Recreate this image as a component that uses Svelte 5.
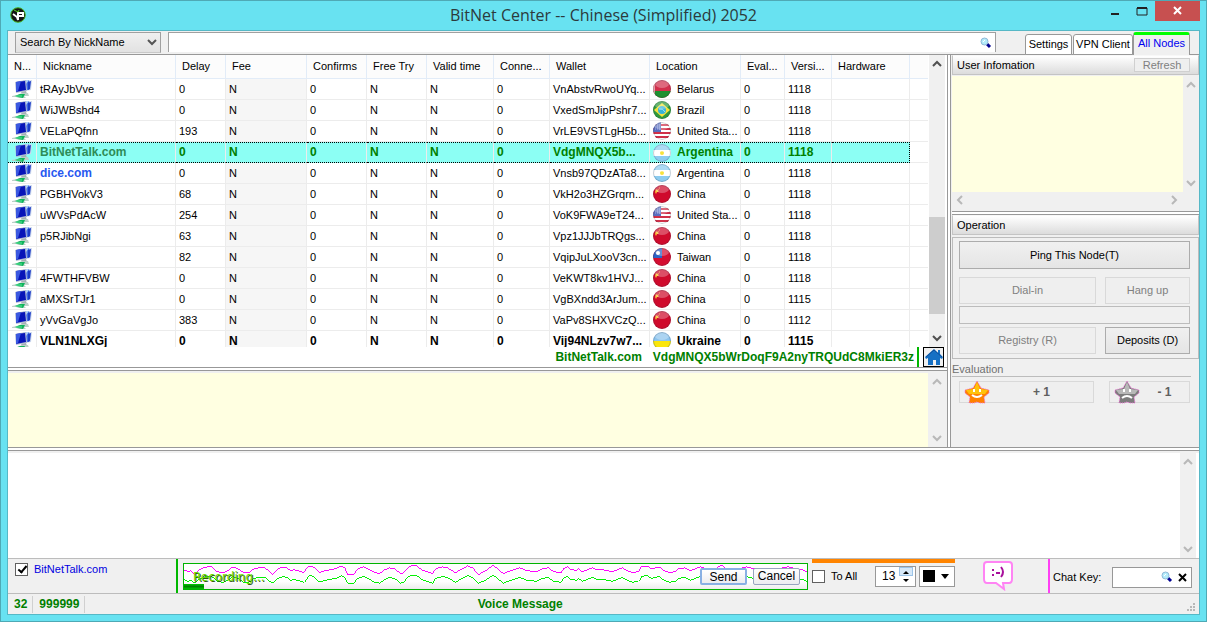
<script lang="ts">
  type Peer = {
    name: string;
    delay: string;
    wallet: string;
    flag: string;
    location: string;
    version: string;
    kind?: string;
  };

  const columns = [
    { title: 'N...', width: 29 },
    { title: 'Nickname', width: 139 },
    { title: 'Delay', width: 50 },
    { title: 'Fee', width: 81 },
    { title: 'Confirms', width: 60 },
    { title: 'Free Try', width: 60 },
    { title: 'Valid time', width: 67 },
    { title: 'Conne...', width: 56 },
    { title: 'Wallet', width: 100 },
    { title: 'Location', width: 91 },
    { title: 'Eval...', width: 44 },
    { title: 'Versi...', width: 47 },
    { title: 'Hardware', width: 78 }
  ];

  const peers: Peer[] = [
    { name: 'tRAyJbVve', delay: '0', wallet: 'VnAbstvRwoUYq...', flag: 'by', location: 'Belarus', version: '1118' },
    { name: 'WiJWBshd4', delay: '0', wallet: 'VxedSmJipPshr7...', flag: 'br', location: 'Brazil', version: '1118' },
    { name: 'VELaPQfnn', delay: '193', wallet: 'VrLE9VSTLgH5b...', flag: 'us', location: 'United Sta...', version: '1118' },
    { name: 'BitNetTalk.com', delay: '0', wallet: 'VdgMNQX5b...', flag: 'ar', location: 'Argentina', version: '1118', kind: 'selected' },
    { name: 'dice.com', delay: '0', wallet: 'Vnsb97QDzATa8...', flag: 'ar', location: 'Argentina', version: '1118', kind: 'site' },
    { name: 'PGBHVokV3', delay: '68', wallet: 'VkH2o3HZGrqrn...', flag: 'cn', location: 'China', version: '1118' },
    { name: 'uWVsPdAcW', delay: '254', wallet: 'VoK9FWA9eT24...', flag: 'us', location: 'United Sta...', version: '1118' },
    { name: 'p5RJibNgi', delay: '63', wallet: 'Vpz1JJJbTRQgs...', flag: 'cn', location: 'China', version: '1118' },
    { name: '', delay: '82', wallet: 'VqipJuLXooV3cn...', flag: 'tw', location: 'Taiwan', version: '1118' },
    { name: '4FWTHFVBW', delay: '0', wallet: 'VeKWT8kv1HVJ...', flag: 'cn', location: 'China', version: '1118' },
    { name: 'aMXSrTJr1', delay: '0', wallet: 'VgBXndd3ArJum...', flag: 'cn', location: 'China', version: '1115' },
    { name: 'yVvGaVgJo', delay: '383', wallet: 'VaPv8SHXVCzQ...', flag: 'cn', location: 'China', version: '1112' },
    { name: 'VLN1NLXGj', delay: '0', wallet: 'Vij94NLzv7w7...', flag: 'ua', location: 'Ukraine', version: '1115', kind: 'own' }
  ];

  // x, y pairs of the recorded signal
  const wave = [
    [0, 6], [4, 8], [7, 7], [11, 11], [15, 6], [19, 4], [24, 3], [28, 3], [33, 8], [39, 9], [44, 7], [49, 3],
    [54, 5], [60, 9], [65, 9], [70, 5], [75, 4], [81, 4], [86, 8], [89, 11], [94, 5], [99, 3], [103, 4], [107, 7],
    [110, 6], [114, 7], [120, 9], [124, 3], [127, 2], [131, 4], [136, 9], [141, 7], [146, 6], [152, 5], [158, 2],
    [161, 4], [164, 11], [170, 11], [174, 5], [180, 3], [186, 6], [191, 9], [196, 10], [201, 6], [206, 4], [211, 5],
    [217, 10], [220, 9], [224, 4], [227, 2], [233, 2], [238, 6], [249, 10], [252, 5], [259, 3], [264, 4], [272, 9],
    [277, 6], [284, 2], [289, 4], [295, 11], [302, 7], [309, 2], [314, 5], [320, 10], [327, 7], [336, 4], [344, 7],
    [353, 8], [359, 5], [365, 4], [370, 8], [378, 9], [380, 5], [384, 3], [387, 6], [390, 6], [393, 7], [395, 5],
    [399, 8], [409, 4], [414, 6], [420, 6], [429, 8], [439, 4], [444, 7], [449, 9], [455, 8], [458, 3], [464, 2],
    [468, 5], [476, 3], [481, 7], [486, 9], [492, 8], [495, 5], [502, 4], [507, 7], [512, 5], [517, 3], [530, 7],
    [538, 1], [547, 8], [563, 3], [571, 5], [580, 8], [605, 3], [619, 6], [624, 8]
  ];

  const topWave = wave.map(([x, y]) => `${x},${y}`).join(' ');
  const bottomWave = wave.map(([x, y]) => `${x},${Math.min(y + 10, 20)}`).join(' ');

  let fontSize = $state(13);
  let showSender = $state(true);
  let toAll = $state(false);
</script>

{#snippet chevron(path: string)}
  <svg class="chevron" width="10" height="10" viewBox="0 0 10 10"><path d={path} fill="none" stroke="currentColor" stroke-width="2" /></svg>
{/snippet}

{#snippet vbar()}
  <div class="vbar">
    {@render chevron('M1 7 5 3 9 7')}
    {@render chevron('M1 3 5 7 9 3')}
  </div>
{/snippet}

{#snippet magnifier()}
  <svg width="12" height="12" viewBox="0 0 12 12">
    <path d="M7 7 10 10" stroke="#000090" stroke-width="3" />
    <circle cx="4.5" cy="4.5" r="3.5" fill="#b4ecfa" stroke="#8fb8d8" />
    <path d="M3 5 5 3" stroke="#fff" />
  </svg>
{/snippet}

{#snippet computers()}
  <svg class="computers" width="21" height="20" viewBox="0 0 21 20">
    <path d="M12 2l8-1-1 10-6 1z" fill="#ccd8ec" />
    <path d="M11 2l6-1 1 9-5 2z" fill="#3d68e4" />
    <path d="M16 3l3-1-1 8-2 1z" fill="#1c3cc8" />
    <path d="M11 1h6l-3 4z" fill="#b4d4fa" />
    <path d="M3 3 14 1l1 11-11 2z" fill="#b4bcd4" />
    <path d="M4 3 13 2l1 9-10 2z" fill="#0714b8" />
    <path d="M4 3 9 2 6 12 4 13z" fill="#3a58e0" />
    <path d="M9 13l5-1 1 3h-5z" fill="#a4b0b4" />
    <path d="M0 17l5-1 5-2h6l1 3h-5l2 2H7l-3-1H0z" fill="#bcd0c8" />
    <path d="M3 17l5-2 5 0-2 4-5-1z" fill="#10b45c" />
    <path d="M4 17h6" stroke="#58e898" />
  </svg>
{/snippet}

{#snippet flagIcon(code: string)}
  <svg class="flag" width="18" height="18" viewBox="0 0 18 18">
    <g clip-path="url(#ball)">
      {#if code === 'by'}
        <path fill="#d2304c" d="M0 0h18v18H0z" />
        <path fill="#1f9030" d="M0 11h18v7H0z" />
        <path fill="#eba6ae" d="M0 0h2v18H0z" />
      {:else if code === 'br'}
        <path fill="#2f9a3c" d="M0 0h18v18H0z" />
        <path fill="#f6e23c" d="M9 2l8 7-8 7-8-7z" />
        <circle cx="9" cy="9" r="4" fill="#38b4d8" />
        <path d="M6 8q4-1 6 3" stroke="#a4e4f4" fill="none" />
      {:else if code === 'us'}
        <path fill="#fff" d="M0 0h18v18H0z" />
        <path d="M0 3h18M0 7h18M0 11h18M0 15h18" stroke="#d03048" stroke-width="2" />
        <path fill="#5a6fc0" d="M0 0h8v10H0z" />
        <path d="M2 3h6M2 5h6M2 7h6" stroke="#a5b2e2" stroke-dasharray="1 1" />
      {:else if code === 'ar'}
        <path fill="#8cccf0" d="M0 0h18v18H0z" />
        <path fill="#fff" d="M0 6h18v6H0z" />
        <circle cx="9" cy="9" r="2" fill="#f8e23c" />
      {:else if code === 'tw'}
        <path fill="#d40c30" d="M0 0h18v18H0z" />
        <path fill="#2c62c4" d="M0 0h9v10H0z" />
        <circle cx="5" cy="5" r="2" fill="#fff" />
      {:else if code === 'ua'}
        <path fill="#8cc4ee" d="M0 0h18v18H0z" />
        <path fill="#fae60c" d="M0 9h18v9H0z" />
      {:else}
        <path fill="#cf0a2c" d="M0 0h18v18H0z" />
        <path d="M3 4l1 1 2-1-1 2 1 1-2 0-1 2-1-2z" fill="#f8c030" />
        <path d="M6 3h1" stroke="#f0a030" />
      {/if}
      <ellipse cx="9" cy="4" rx="7" ry="4" fill="#fff" opacity="0.28" />
      <circle cx="9" cy="9" r="8.5" fill="none" stroke="#303848" opacity="0.25" />
    </g>
  </svg>
{/snippet}

{#snippet star(light: string, dark: string, mouth: string)}
  <svg width="26" height="24" viewBox="0 0 26 24">
    <path d="M13 1l4 7 8 2v3l-5 4 1 6h-5l-3-1-3 1H5l1-6-5-4v-3l8-2z" fill={dark} stroke="#f070d8" stroke-dasharray="1 1" />
    <path d="M13 2l3 7 8 1-3 4H5l-3-4 8-1z" fill={light} />
    <path d="M10 9v3M16 9v3" stroke="#fff" stroke-width="2" />
    <path d={mouth} fill="none" stroke="#fff" stroke-width="2" />
  </svg>
{/snippet}

<svg class="defs" width="0" height="0"><clipPath id="ball"><circle cx="9" cy="9" r="9" /></clipPath></svg>

<div class="window">
  <header class="titlebar">
    <svg class="logo" width="16" height="16" viewBox="0 0 16 16">
      <circle cx="8" cy="8" r="7.3" fill="#161616" stroke="#48b020" stroke-width="1" />
      <path d="M3 7l4 3 1 3V6h5v3H9" fill="none" stroke="#fff" stroke-width="2" />
      <path d="M4 3l4 2 1-2" fill="none" stroke="#58d020" />
    </svg>
    <h1>BitNet Center -- Chinese (Simplified) 2052</h1>
    <div class="window-buttons">
      <button aria-label="Minimize"><svg width="10" height="12"><path d="M1 9h8" stroke="#222" stroke-width="2" /></svg></button>
      <button aria-label="Maximize"><svg width="12" height="10"><path d="M1 2h10v7H1z" fill="none" stroke="#222" stroke-width="1" /><path d="M1 2h10" stroke="#222" stroke-width="2" /></svg></button>
      <button class="close" aria-label="Close"><svg width="10" height="10"><path d="M1 1 8 8M8 1 1 8" stroke="#fff" stroke-width="2" /></svg></button>
    </div>
  </header>

  <div class="client">
    <div class="toolbar">
      <label class="search-by">
        <select aria-label="Search by"><option>Search By NickName</option></select>
        {@render chevron('M1 3 5 7 9 3')}
      </label>
      <div class="search">
        <input type="text" aria-label="Search" />
        {@render magnifier()}
      </div>
      <nav class="tabs">
        <button>Settings</button>
        <button class="vpn">VPN Client</button>
        <button class="active">All Nodes</button>
      </nav>
    </div>

    <div class="main">
      <section class="nodes">
        <div class="list">
          <div class="table-view">
            <table>
              <colgroup>
                {#each columns as column}
                  <col style="width: {column.width}px" />
                {/each}
                <col />
              </colgroup>
              <thead>
                <tr>
                  {#each columns as column}
                    <th>{column.title}</th>
                  {/each}
                  <th></th>
                </tr>
              </thead>
              <tbody>
                {#each peers as peer}
                  <tr class={peer.kind}>
                    <td>{@render computers()}</td>
                    <td class="name">{peer.name}</td>
                    <td>{peer.delay}</td>
                    <td class="fee">N</td>
                    <td>0</td>
                    <td>N</td>
                    <td>N</td>
                    <td>0</td>
                    <td>{peer.wallet}</td>
                    <td><span class="place">{@render flagIcon(peer.flag)}{peer.location}</span></td>
                    <td>0</td>
                    <td>{peer.version}</td>
                    <td></td>
                    <td></td>
                  </tr>
                {/each}
              </tbody>
            </table>
          </div>
          <div class="vbar dark">
            {@render chevron('M1 7 5 3 9 7')}
            <div class="thumb"></div>
            {@render chevron('M1 3 5 7 9 3')}
          </div>
        </div>
        <div class="wallet-line">
          <span>BitNetTalk.com</span>
          <span class="address">VdgMNQX5bWrDoqF9A2nyTRQUdC8MkiER3z</span>
          <button class="home" aria-label="Home">
            <svg width="18" height="18" viewBox="0 0 18 18">
              <path d="M9 1 0 9l1 2 2-1v7h5v-5h3v5h4v-7l2 1 1-2-3-3V2h-2v3z" fill="#1670c4" />
              <path d="M9 2 1 9M9 2l8 7" stroke="#0d4c98" />
            </svg>
          </button>
        </div>
        <div class="splitter"></div>
        <div class="notice">
          <textarea aria-label="Notice" readonly></textarea>
          {@render vbar()}
        </div>
      </section>

      <div class="vsplitter"></div>

      <aside>
        <div class="panel-title">
          <h2>User Infomation</h2>
          <button class="refresh" disabled>Refresh</button>
        </div>
        <div class="info">
          <textarea aria-label="User information" readonly></textarea>
          {@render vbar()}
        </div>
        <div class="hbar">
          {@render chevron('M7 1 3 5 7 9')}
          {@render chevron('M3 1 7 5 3 9')}
        </div>
        <div class="splitter"></div>
        <div class="panel-title"><h2>Operation</h2></div>
        <div class="operations">
          <button class="push wide">Ping This Node(T)</button>
          <button class="push" disabled>Dial-in</button>
          <button class="push" disabled>Hang up</button>
          <div class="progress wide"></div>
          <button class="push" disabled>Registry (R)</button>
          <button class="push">Deposits (D)</button>
        </div>
        <h2 class="evaluation-title">Evaluation</h2>
        <div class="evaluation">
          <button class="vote up" disabled>{@render star('#ffc20a', '#ff8200', 'M8 15q5 4 10 0')}<span>+ 1</span></button>
          <button class="vote down" disabled>{@render star('#b8b8b8', '#7c7c7c', 'M8 18q5-4 10 0')}<span>- 1</span></button>
        </div>
      </aside>
    </div>

    <div class="splitter long"></div>
    <div class="chat">
      <textarea aria-label="Chat" readonly></textarea>
      {@render vbar()}
    </div>

    <footer>
      <div class="sender">
        <label><input type="checkbox" bind:checked={showSender} />BitNetTalk.com</label>
      </div>
      <div class="recorder">
        <svg class="wave" viewBox="0 0 624 26" preserveAspectRatio="none">
          <polyline points={topWave} stroke="#ff00ff" />
          <polyline points={bottomWave} stroke="#00f000" />
        </svg>
        <span class="recording">Recording...</span>
        <div class="level"></div>
        <div class="record-buttons">
          <button class="send">Send</button>
          <button>Cancel</button>
        </div>
      </div>
      <div class="options">
        <label><input type="checkbox" bind:checked={toAll} />To All</label>
        <div class="spin">
          <input type="text" aria-label="Font size" bind:value={fontSize} />
          <div class="spin-buttons">
            <button class="plus" aria-label="Increase" onclick={() => fontSize++}><svg width="14" height="8"><path d="M4 6h6L7 3z" /></svg></button>
            <button aria-label="Decrease" onclick={() => fontSize--}><svg width="14" height="8"><path d="M4 2h6L7 5z" /></svg></button>
          </div>
        </div>
        <button class="colour" aria-label="Text colour"><i></i><svg width="8" height="5"><path d="M0 0h8L4 5z" /></svg></button>
      </div>
      <button class="smiley" aria-label="Smileys">
        <svg width="30" height="30" viewBox="0 0 30 30">
          <path d="M4 1h22q3 0 3 3v14q0 4-3 4h-6l1 6-8-6H4q-3 0-3-4V4q0-3 3-3z" fill="#fff" stroke="#ff84f4" stroke-width="2" />
          <path d="M10 8v2M10 13v2M13 12h4M18 6q4 5 0 10" fill="none" stroke="#a8109c" stroke-width="2" />
        </svg>
      </button>
      <div class="chat-key">
        <label for="chat-key">Chat Key:</label>
        <div class="key-box">
          <input id="chat-key" type="text" />
          {@render magnifier()}
          <button aria-label="Clear"><svg width="9" height="9"><path d="M1 1 8 8M8 1 1 8" stroke="#000" stroke-width="2" /></svg></button>
        </div>
      </div>
    </footer>

    <div class="statusbar">
      <span>32</span>
      <span>999999</span>
      <span class="message">Voice Message</span>
      <svg width="9" height="9"><path d="M6 1h2M3 4h2M6 4h2M0 7h2M3 7h2M6 7h2" stroke="#b8b8b8" stroke-width="2" /></svg>
    </div>
  </div>
</div>

<style>
  :global(body) {
    margin: 0;
  }

  * {
    box-sizing: border-box;
  }

  .defs {
    position: absolute;
  }

  .window {
    display: flex;
    flex-direction: column;
    height: 100vh;
    padding: 0 6px 6px;
    border: 1px solid #4fa9b5;
    background: #68e2f1;
    color: #000;
    font: 11px/13px "Liberation Sans", Arial, sans-serif;
  }

  button, input, select, textarea {
    margin: 0;
    padding: 0;
    border: 0;
    border-radius: 0;
    background: none;
    color: inherit;
    font: inherit;
    outline: none;
  }

  textarea {
    flex: 1;
    resize: none;
  }

  h1, h2 {
    margin: 0;
    font-weight: normal;
  }

  svg {
    display: block;
    flex: none;
  }

  /* Title bar */
  .titlebar {
    display: grid;
    grid-template-columns: 1fr auto 1fr;
    flex: none;
    height: 29px;
  }

  .logo {
    margin: 6px 0 0 3px;
  }

  h1 {
    color: #2c3a3c;
    font: 16px/28px "Open Sans", "Noto Sans", sans-serif;
  }

  .window-buttons {
    display: flex;
    justify-content: flex-end;
    height: 20px;
  }

  .window-buttons button {
    display: flex;
    align-items: center;
    justify-content: center;
    width: 27px;
  }

  .window-buttons .close {
    width: 45px;
    background: #c75050;
  }

  .client {
    display: flex;
    flex: 1;
    flex-direction: column;
    min-height: 0;
    border: 1px solid #56b8c6;
    background: #f0f0f0;
  }

  /* Toolbar */
  .toolbar {
    display: flex;
    flex: none;
    height: 24px;
    padding-left: 7px;
    border-bottom: 1px solid #989898;
  }

  .search-by {
    position: relative;
    width: 146px;
    height: 21px;
    margin-top: 1px;
  }

  select {
    appearance: none;
    width: 100%;
    height: 100%;
    padding-left: 4px;
    border: 1px solid #a0a0a0;
    border-bottom-color: #c8c8c8;
    background: linear-gradient(#f0f0f0, #e2e2e2);
  }

  .search-by .chevron {
    position: absolute;
    top: 5px;
    right: 4px;
    color: #555;
  }

  .search {
    display: flex;
    flex: 1;
    align-items: center;
    height: 20px;
    margin: 1px 0 0 7px;
    padding-right: 3px;
    border: 1px solid #a0a0a0;
    border-bottom: 0;
    background: #fff;
  }

  .search input {
    flex: 1;
  }

  .tabs {
    display: flex;
    align-items: flex-end;
    margin: 0 9px -1px 29px;
  }

  .tabs button {
    width: 47px;
    height: 21px;
    margin-right: 1px;
    border: 1px solid #989898;
    border-radius: 3px 3px 0 0;
    background: #fff;
    white-space: nowrap;
  }

  .tabs .vpn {
    width: 60px;
    margin: 0;
  }

  .tabs .active {
    width: 57px;
    height: 23px;
    margin: 0;
    padding-bottom: 4px;
    border-top: 3px solid #00ff00;
    border-bottom: 0;
    background: #f0f0f0;
    color: #0000f0;
  }

  .main {
    display: flex;
    flex: 1;
    min-height: 0;
  }

  .nodes {
    display: flex;
    flex: 1;
    flex-direction: column;
    min-width: 0;
    background: #fff;
  }

  /* Node list */
  .list {
    display: flex;
    flex: 1;
    min-height: 0;
  }

  .table-view {
    flex: 1;
    min-width: 0;
    overflow: hidden;
  }

  table {
    width: 100%;
    border-spacing: 0;
    table-layout: fixed;
  }

  th, td {
    height: 21px;
    padding: 0 0 0 3px;
    border-right: 1px solid #ececec;
    border-bottom: 1px solid #ececec;
    font-weight: inherit;
    text-align: left;
    white-space: nowrap;
    overflow: hidden;
  }

  th {
    height: 24px;
    padding-left: 6px;
    border-color: #e2ecf8;
    background: #fcfcfc;
  }

  th:last-child, td:last-child {
    border-right: 0;
  }

  td:first-child {
    padding-left: 4px;
  }

  .fee {
    background: #f6f6f6;
  }

  .place {
    display: flex;
    gap: 6px;
    align-items: center;
  }

  .selected, .own {
    font-size: 12px;
    font-weight: bold;
  }

  .selected {
    color: #008000;
  }

  .selected td:not(:last-child) {
    border-top: 1px dotted #000;
    border-bottom: 1px dotted #000;
    background: #8cfff4;
  }

  .selected td:nth-last-child(2) {
    border-right: 1px dotted #000;
  }

  .selected .name {
    color: #2e8b57;
  }

  .site .name {
    color: #2858f0;
    font-size: 12px;
    font-weight: bold;
  }

  .selected svg {
    margin: -1px 0;
  }

  /* Scroll bars */
  .vbar {
    display: flex;
    flex: none;
    flex-direction: column;
    align-items: center;
    justify-content: space-between;
    width: 16px;
    margin: 0 2px 0 1px;
    padding: 4px 0;
    background: #f0f0f0;
    color: #b8b8b8;
  }

  .dark {
    color: #505050;
  }

  .thumb {
    width: 16px;
    height: 97px;
    margin: auto 0 19px;
    background: #cdcdcd;
  }

  .hbar {
    display: flex;
    align-items: center;
    justify-content: space-between;
    height: 16px;
    padding: 0 20px 0 3px;
    color: #b8b8b8;
  }

  .wallet-line {
    display: flex;
    align-items: center;
    flex: none;
    justify-content: flex-end;
    height: 20px;
    padding-right: 3px;
    color: #008000;
    font-size: 12px;
    font-weight: bold;
  }

  .address {
    margin: 0 3px 0 11px;
  }

  .wallet-line::after {
    order: 1;
    width: 2px;
    height: 20px;
    margin-right: 4px;
    background: #00b800;
    content: "";
  }

  .home {
    display: flex;
    order: 2;
    align-items: center;
    justify-content: center;
    width: 21px;
    height: 20px;
    border: 1px solid #000;
    background: #f0f0f0;
  }

  .splitter {
    flex: none;
    height: 4px;
    border: solid #989898;
    border-width: 1px 0;
    background: #fff;
  }

  .long {
    margin-bottom: 2px;
  }

  .vsplitter {
    width: 4px;
    margin-right: 1px;
    border: solid #989898;
    border-width: 0 1px;
    background: #fff;
  }

  .notice {
    display: flex;
    flex: none;
    height: 76px;
    padding-top: 2px;
    background: #f0f0f0;
  }

  .notice textarea, .info textarea {
    background: #ffffe1;
  }

  /* Right column */
  aside {
    flex: none;
    width: 247px;
  }

  .panel-title {
    display: flex;
    align-items: center;
    height: 20px;
    padding: 0 8px 0 4px;
    border: 1px solid #c4c4c4;
    border-top-color: #f8f8f8;
    background: linear-gradient(#fff, #dcdcdc);
  }

  h2 {
    flex: 1;
    font-size: 11px;
  }

  .refresh {
    width: 56px;
    height: 14px;
    border: 1px solid #d0d0d0;
    background: #efefef;
    color: #808080;
  }

  .info {
    display: flex;
    height: 117px;
    padding-top: 1px;
  }

  .info .vbar {
    margin: 0;
  }

  aside .splitter {
    margin-top: 3px;
  }

  .operations {
    display: grid;
    grid-template-columns: 137px 1fr;
    gap: 2px 9px;
    margin-top: 2px;
    padding: 3px 8px 4px 6px;
    border: 1px solid #bcbcbc;
  }

  .wide {
    grid-column: span 2;
  }

  .push {
    height: 27px;
    border: 1px solid #acacac;
    background: linear-gradient(#f0f0f0, #e5e5e5);
  }

  .push.wide {
    height: 28px;
    margin-bottom: 6px;
  }

  .push:disabled, .vote {
    border-color: #d9d9d9;
    background: #efefef;
    color: #808080;
  }

  .progress {
    height: 18px;
    margin-bottom: 1px;
    border: 1px solid #bcbcbc;
  }

  .evaluation-title {
    padding-top: 4px;
    margin-right: 8px;
    border-bottom: 1px solid #bcbcbc;
    color: #707070;
  }

  .evaluation {
    display: grid;
    grid-template-columns: 135px 81px;
    gap: 15px;
    margin: 4px 9px 0 7px;
  }

  .vote {
    display: flex;
    align-items: center;
    height: 22px;
    padding-left: 4px;
    border: 1px solid #d9d9d9;
    color: #606060;
    font-size: 12px;
    font-weight: bold;
  }

  .vote span {
    flex: 1;
  }

  .chat {
    display: flex;
    flex: none;
    height: 105px;
    padding-right: 1px;
    background: #fff;
  }

  /* Footer */
  footer {
    display: flex;
    flex: none;
    height: 36px;
    border: solid #bcbcbc;
    border-width: 1px 0;
  }

  label {
    display: flex;
    align-items: center;
  }

  input[type="checkbox"] {
    appearance: none;
    width: 13px;
    height: 13px;
    margin-right: 6px;
    border: 1px solid #606060;
    background: #fff;
  }

  input[type="checkbox"]:checked::after {
    display: block;
    width: 3px;
    height: 7px;
    margin: 0 0 0 4px;
    border: solid #000;
    border-width: 0 2px 2px 0;
    transform: rotate(40deg);
    content: "";
  }

  .sender {
    width: 170px;
    padding: 4px 0 0 7px;
    border-right: 2px solid #00b800;
    color: #0000e0;
  }

  .recorder {
    position: relative;
    flex: 1;
    height: 27px;
    margin: 4px 4px 0 5px;
    border: 1px solid #00b400;
    background: linear-gradient(#fff, #fff 70%, #ececec);
  }

  .wave {
    width: 100%;
    height: 100%;
  }

  .wave polyline {
    fill: none;
    shape-rendering: crispEdges;
  }

  .recording {
    position: absolute;
    top: 6px;
    left: 9px;
    color: #6cdc00;
    font: 12px/14px "DejaVu Sans", sans-serif;
    text-shadow: 1px 1px #305810;
  }

  .level {
    position: absolute;
    bottom: 0;
    left: 0;
    width: 20px;
    height: 5px;
    background: linear-gradient(#00c800, #008400, #00c800);
  }

  .record-buttons {
    position: absolute;
    top: 4px;
    right: 7px;
    display: flex;
    gap: 6px;
  }

  .record-buttons button {
    width: 47px;
    height: 17px;
    border: 1px solid #98a4c0;
    border-radius: 2px;
    background: linear-gradient(#fff, #ececf0);
    font-size: 12px;
  }

  .record-buttons .send {
    border: 2px solid #88b0e4;
    line-height: 12px;
  }

  .options {
    display: flex;
    align-items: center;
    width: 143px;
    height: 34px;
    padding-bottom: 4px;
    border-top: 4px solid #ff8400;
  }

  .spin, .colour {
    display: flex;
    height: 21px;
    border: 1px solid #989898;
    background: #fff;
  }

  .spin {
    width: 41px;
    margin: 0 3px 0 auto;
  }

  .spin input {
    width: 23px;
    padding-left: 6px;
    font-size: 12px;
  }

  .spin-buttons {
    display: flex;
    flex-direction: column;
    justify-content: center;
  }

  .spin-buttons button {
    width: 14px;
    height: 9px;
  }

  .spin-buttons .plus {
    border: 1px solid #9cc4e8;
    background: #d6e8f8;
  }

  .plus svg {
    margin: -1px;
  }

  .colour {
    align-items: center;
    justify-content: space-between;
    width: 36px;
    padding: 0 5px 0 3px;
  }

  .colour i {
    width: 12px;
    height: 12px;
    background: #000;
  }

  .smiley {
    width: 93px;
    padding: 0 0 0 28px;
  }

  .chat-key {
    display: flex;
    align-items: center;
    width: 151px;
    padding: 2px 7px 0 3px;
    border-left: 2px solid #ff40f4;
  }

  .key-box {
    display: flex;
    gap: 5px;
    align-items: center;
    width: 80px;
    height: 21px;
    margin-left: auto;
    padding-right: 4px;
    border: 1px solid #989898;
    background: #fff;
  }

  .key-box input {
    flex: 1;
    min-width: 0;
  }

  .statusbar {
    display: flex;
    flex: none;
    align-items: center;
    height: 20px;
    padding-right: 3px;
    color: #008000;
    font-size: 12px;
    font-weight: bold;
  }

  .statusbar span {
    padding: 2px 5px 2px 6px;
    border-right: 1px solid #d0d0d0;
  }

  .statusbar .message {
    flex: 1;
    border: 0;
    padding-right: 238px;
    text-align: center;
  }

  .statusbar svg {
    align-self: flex-end;
    margin-bottom: 2px;
  }
</style>
